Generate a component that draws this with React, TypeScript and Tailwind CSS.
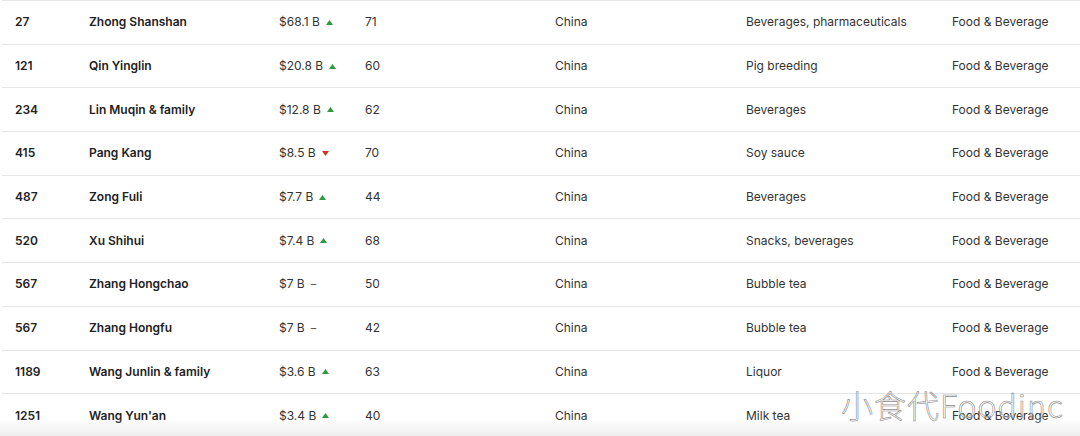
import React from 'react'

type Trend = 'up' | 'down' | 'flat'

const rows: [string, string, string, Trend, string, string, string][] = [
  ['27', 'Zhong Shanshan', '$68.1 B', 'up', '71', 'China', 'Beverages, pharmaceuticals'],
  ['121', 'Qin Yinglin', '$20.8 B', 'up', '60', 'China', 'Pig breeding'],
  ['234', 'Lin Muqin & family', '$12.8 B', 'up', '62', 'China', 'Beverages'],
  ['415', 'Pang Kang', '$8.5 B', 'down', '70', 'China', 'Soy sauce'],
  ['487', 'Zong Fuli', '$7.7 B', 'up', '44', 'China', 'Beverages'],
  ['520', 'Xu Shihui', '$7.4 B', 'up', '68', 'China', 'Snacks, beverages'],
  ['567', 'Zhang Hongchao', '$7 B', 'flat', '50', 'China', 'Bubble tea'],
  ['567', 'Zhang Hongfu', '$7 B', 'flat', '42', 'China', 'Bubble tea'],
  ['1189', 'Wang Junlin & family', '$3.6 B', 'up', '63', 'China', 'Liquor'],
  ['1251', "Wang Yun'an", '$3.4 B', 'up', '40', 'China', 'Milk tea'],
]

function TrendMark({ trend }: { trend: Trend }) {
  if (trend === 'flat') return <span className="ml-[6px] text-[11px] text-[#555]">–</span>
  return (
    <svg width="7" height="5" viewBox="0 0 7 5" className="ml-[6px]">
      {trend === 'up' ? (
        <polygon points="3.5,0 7,5 0,5" fill="#2f9a3b" />
      ) : (
        <polygon points="0,0 7,0 3.5,5" fill="#c8372d" />
      )}
    </svg>
  )
}

export default function App() {
  return (
    <div
      className="relative w-[1080px] h-[436px] overflow-hidden bg-white text-[12px] text-[#333]"
      style={{ fontFamily: 'Inter, "Noto Sans", sans-serif' }}
    >
      <div className="flex flex-col pl-[2px]">
        {rows.map(([rank, name, worth, trend, age, country, source], i) => (
          <div
            key={i}
            className="grid grid-cols-[74px_190px_86px_190px_191px_206px_1fr] items-center h-[43.7px] border-t border-[#e6e6e6] pl-[13px]"
          >
            <span className="font-semibold text-[#222]">{rank}</span>
            <span className="font-semibold text-[#222]">{name}</span>
            <span className="flex items-center">
              {worth}
              <TrendMark trend={trend} />
            </span>
            <span>{age}</span>
            <span>{country}</span>
            <span>{source}</span>
            <span>Food &amp; Beverage</span>
          </div>
        ))}
      </div>
      <div className="pointer-events-none absolute left-0 right-0 bottom-0 h-[18px] bg-gradient-to-b from-transparent to-[#e9e9e9]/80" />
      <div
        className="pointer-events-none absolute right-[16px] top-[380px] text-[32px] font-light tracking-[1px] text-white/40 [-webkit-text-stroke:0.6px_#8a8a8a]"
        style={{ fontFamily: '"Noto Sans CJK SC", "Noto Sans", sans-serif' }}
      >
        小食代Foodinc
      </div>
    </div>
  )
}
